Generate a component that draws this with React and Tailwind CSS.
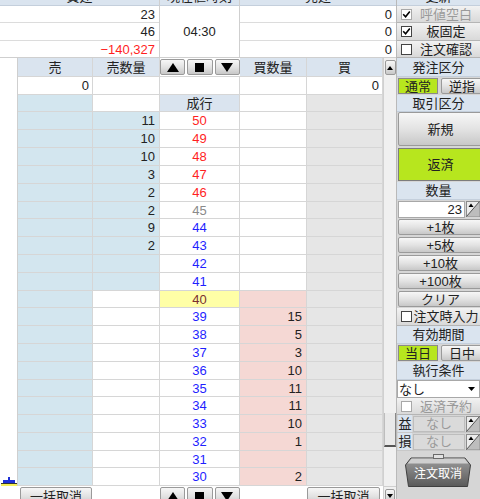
import React from 'react';
import clsx from 'clsx';

const HDR = 'bg-[#dae4ef]';
const SELL = 'bg-[#d3e6ef]';
const PINK = 'bg-[#f5d8d4]';
const GRAY = 'bg-[#e6e6e6]';
const LIME = 'bg-[#b7e61e]';
const BTN = 'bg-gradient-to-b from-[#f7f7f7] via-[#e3e3e3] to-[#c8c8c8] border border-[#9a9a9a] rounded-[2px]';
const LINE = 'border-[#d6d6d6]';

const prices = [50, 49, 48, 47, 46, 45, 44, 43, 42, 41, 40, 39, 38, 37, 36, 35, 34, 33, 32, 31, 30];
const heights = [18, 18, 18, 18, 18, 17, 18, 18, 18, 18, 17, 18, 18, 18, 18, 17, 18, 18, 18, 17, 18];
const sellQty = { 50: 11, 49: 10, 48: 10, 47: 3, 46: 2, 45: 2, 44: 9, 43: 2 };
const buyQty = { 39: 15, 38: 5, 37: 3, 36: 10, 35: 11, 34: 11, 33: 10, 32: 1, 30: 2 };

function priceColor(p) {
  if (p >= 46) return 'text-[#ff1f1f]';
  if (p === 45) return 'text-[#8a8a8a]';
  if (p === 40) return 'text-[#7a3030]';
  return 'text-[#1f1fff]';
}

function Tri({ down, w = 12, h = 9 }) {
  return (
    <svg width={w} height={h} viewBox={`0 0 ${w} ${h}`}>
      <polygon points={down ? `0,0 ${w},0 ${w / 2},${h}` : `0,${h} ${w / 2},0 ${w},${h}`} fill="#000" />
    </svg>
  );
}

function ArrowButtons() {
  return (
    <div className="flex h-full gap-[2px] py-[1px]">
      <div className={clsx(BTN, 'flex-1 flex items-center justify-center')}>
        <Tri />
      </div>
      <div className={clsx(BTN, 'flex-1 flex items-center justify-center')}>
        <span className="w-[9px] h-[9px] bg-black" />
      </div>
      <div className={clsx(BTN, 'flex-1 flex items-center justify-center')}>
        <Tri down />
      </div>
    </div>
  );
}

function Spin() {
  return (
    <svg width="14" height="16" viewBox="0 0 14 16" className="shrink-0">
      <rect x="0.5" y="0.5" width="13" height="15" fill="#ececec" stroke="#8c8c8c" />
      <polygon points="13.5,0.5 13.5,15.5 0.5,15.5" fill="#bdbdbd" />
      <line x1="0.5" y1="15.5" x2="13.5" y2="0.5" stroke="#555" />
      <polygon points="2.5,6 5,2.5 7.5,6" fill="#000" />
    </svg>
  );
}

function Check({ checked, disabled }) {
  return (
    <span
      className={clsx(
        'w-[11px] h-[11px] shrink-0 border bg-white flex items-center justify-center',
        disabled ? 'border-[#a8a8a8]' : 'border-[#444]'
      )}
    >
      {checked && (
        <svg width="9" height="9" viewBox="0 0 9 9">
          <path d="M1.2 4.3 L3.6 6.8 L7.8 1.6" stroke="#000" strokeWidth="1.6" fill="none" />
        </svg>
      )}
    </span>
  );
}

function Hdr({ h, children }) {
  return (
    <div className={clsx(HDR, h, 'flex items-center justify-center border-b border-[#c4cfdc]')}>{children}</div>
  );
}

function CheckRow({ h, checked, disabled, children }) {
  return (
    <div className={clsx(h, 'flex items-center pl-[4px] bg-gradient-to-b from-[#f2f2f2] to-[#d9d9d9] border-b border-[#b5b5b5]')}>
      <Check checked={checked} disabled={disabled} />
      <span className={clsx('flex-1 text-center', disabled ? 'text-[#9a9a9a]' : 'text-[#222]')}>{children}</span>
    </div>
  );
}

function PanelButton({ children }) {
  return (
    <div className="h-[18px] py-[1px] pl-[1px] -mr-[3px]">
      <div className={clsx(BTN, 'h-full flex items-center justify-center')}>{children}</div>
    </div>
  );
}

function Toggle({ on, off }) {
  return (
    <div className="h-[18px] py-[1px] pl-[1px] flex gap-[3px] -mr-[3px]">
      <div className={clsx(LIME, 'w-[40px] border border-[#8a8a8a] flex items-center justify-center')}>{on}</div>
      <div className={clsx(BTN, 'flex-1 flex items-center justify-center')}>{off}</div>
    </div>
  );
}

function LimitRow({ label }) {
  return (
    <div className="h-[18px] flex items-center pl-[1px] gap-[1px] border-b border-[#c8c8c8]">
      <div className={clsx(HDR, 'w-[15px] h-full flex items-center justify-center')}>{label}</div>
      <div className="w-[56px] h-[16px] bg-[#dadada] border border-[#bdbdbd] flex items-center justify-center text-[#9a9a9a]">
        なし
      </div>
      <Spin />
    </div>
  );
}

function CancelBox() {
  return (
    <div className="relative w-[68px] h-[35px] ml-[7px] mt-[2px] flex items-center justify-center">
      <svg className="absolute inset-0" width="68" height="35" viewBox="0 0 68 35">
        <defs>
          <linearGradient id="cx" x1="0" y1="0" x2="0" y2="1">
            <stop offset="0" stopColor="#9c9c9c" />
            <stop offset="1" stopColor="#5a5a5a" />
          </linearGradient>
        </defs>
        <path d="M7 5 H61 L66.5 12 L63.5 33.5 H4.5 L1.5 12 Z" fill="url(#cx)" stroke="#3f3f3f" />
        <path d="M7.5 5.5 H60.5 L64.5 10.5 H3.5 Z" fill="#cfcfcf" />
        <rect x="29.5" y="1.5" width="10" height="4" fill="#e2e2e2" stroke="#6a6a6a" />
      </svg>
      <span className="relative text-white text-[12px] mt-[7px]">注文取消</span>
    </div>
  );
}

function BookRow({ h, children }) {
  return <div className={clsx('flex', h)}>{children}</div>;
}

function Cell({ w, bg, className, children }) {
  return (
    <div className={clsx('h-full border-r border-b flex items-center', LINE, w, bg, className)}>{children}</div>
  );
}

export default function App() {
  return (
    <div className="w-[480px] h-[499px] overflow-hidden bg-white text-[13px] leading-none text-[#222] font-['Liberation_Sans','Noto_Sans_CJK_JP',sans-serif]">
      <div className="flex -mt-[12px]">
        <div className="w-[396px] flex flex-col">
          {/* summary */}
          <div className="flex">
            <div className="w-[160px] border-r border-[#cfcfcf]">
              <Hdr h="h-[18px]">買建</Hdr>
              <div className="h-[17px] flex items-center justify-end pr-[4px] border-b border-[#dcdcdc]">23</div>
              <div className="h-[18px] flex items-center justify-end pr-[4px] border-b border-[#dcdcdc]">46</div>
              <div className="h-[17px] flex items-center justify-end pr-[4px] border-b border-[#cfcfcf] text-[#ff1f1f]">
                −140,327
              </div>
            </div>
            <div className="w-[80px] flex flex-col border-r border-[#cfcfcf]">
              <Hdr h="h-[18px]">現在値時刻</Hdr>
              <div className="flex-1 flex items-center justify-center border-b border-[#cfcfcf]">04:30</div>
            </div>
            <div className="w-[156px]">
              <Hdr h="h-[18px]">売建</Hdr>
              <div className="h-[17px] flex items-center justify-end pr-[4px] border-b border-[#dcdcdc]">0</div>
              <div className="h-[18px] flex items-center justify-end pr-[4px] border-b border-[#dcdcdc]">0</div>
              <div className="h-[17px] flex items-center justify-end pr-[4px] border-b border-[#cfcfcf]">0</div>
            </div>
          </div>

          {/* order book */}
          <div className="flex">
            <div className="w-[383px] flex flex-col">
              <BookRow h="h-[19px]">
                <div className="w-[18px] h-full border-r border-[#cfcfcf]" />
                <Cell w="w-[75px]" bg={HDR} className="justify-center border-[#c4cfdc]">売</Cell>
                <Cell w="w-[67px]" bg={HDR} className="justify-center border-[#c4cfdc]">売数量</Cell>
                <div className="w-[80px] h-full border-b border-[#d6d6d6]">
                  <ArrowButtons />
                </div>
                <Cell w="w-[67px]" bg={HDR} className="justify-center border-[#c4cfdc]">買数量</Cell>
                <Cell w="w-[76px]" bg={HDR} className="justify-center border-[#c4cfdc]">買</Cell>
              </BookRow>
              <BookRow h="h-[18px]">
                <div className="w-[18px] h-full border-r border-[#cfcfcf]" />
                <Cell w="w-[75px]" className="justify-end pr-[3px]">0</Cell>
                <Cell w="w-[67px]" />
                <Cell w="w-[80px]" />
                <Cell w="w-[67px]" />
                <Cell w="w-[76px]" className="justify-end pr-[3px]">0</Cell>
              </BookRow>
              <BookRow h="h-[17px]">
                <div className="w-[18px] h-full border-r border-[#cfcfcf]" />
                <Cell w="w-[75px]" bg={SELL} />
                <Cell w="w-[67px]" />
                <Cell w="w-[80px]" bg={HDR} className="justify-center">成行</Cell>
                <Cell w="w-[67px]" />
                <Cell w="w-[76px]" bg={GRAY} />
              </BookRow>
              {prices.map((p, i) => (
                <BookRow key={p} h={heights[i] === 17 ? 'h-[17px]' : 'h-[18px]'}>
                  <div className="w-[18px] h-full border-r border-[#cfcfcf] flex flex-col justify-end">
                    {p === 30 && (
                      <div className="flex flex-col items-center">
                        <span className="w-[2px] h-[3px] bg-[#1d2fd6]" />
                        <span className="w-[12px] h-[3px] bg-[#1d2fd6]" />
                        <span className="w-[16px] h-[1px] bg-[#333]" />
                        <span className="w-[16px] h-[2px] bg-[#f5ef5a]" />
                      </div>
                    )}
                  </div>
                  <Cell w="w-[75px]" bg={SELL} />
                  <Cell w="w-[67px]" bg={p >= 41 ? SELL : 'bg-white'} className="justify-end pr-[4px]">
                    {sellQty[p]}
                  </Cell>
                  <Cell
                    w="w-[80px]"
                    bg={p === 40 ? 'bg-[#ffffa6]' : 'bg-white'}
                    className={clsx('justify-center', priceColor(p))}
                  >
                    {p}
                  </Cell>
                  <Cell w="w-[67px]" bg={p <= 40 ? PINK : 'bg-white'} className="justify-end pr-[4px]">
                    {buyQty[p]}
                  </Cell>
                  <Cell w="w-[76px]" bg={GRAY} />
                </BookRow>
              ))}
              <BookRow h="h-[20px]">
                <div className="w-[18px] h-full" />
                <div className="w-[75px] h-full pl-[2px] pr-[1px] pt-[1px]">
                  <div className={clsx(BTN, 'h-[18px] flex items-center justify-center')}>一括取消</div>
                </div>
                <div className="w-[67px] h-full" />
                <div className="w-[80px] h-full">
                  <ArrowButtons />
                </div>
                <div className="w-[67px] h-full" />
                <div className="w-[76px] h-full pr-[3px] pt-[1px]">
                  <div className={clsx(BTN, 'h-[18px] flex items-center justify-center')}>一括取消</div>
                </div>
              </BookRow>
            </div>

            {/* scrollbar */}
            <div className="w-[13px] bg-[#f0f0f0] border-l border-[#d0d0d0] flex flex-col items-center">
              <div className={clsx(BTN, 'mt-[2px] w-[11px] h-[15px] flex items-center justify-center')}>
                <Tri w={6} h={4} />
              </div>
              <div className="mt-[338px] w-[12px] h-[34px] bg-[#e9e9e9] border-l border-[#bdbdbd] border-b-2 border-b-[#555] border-r border-r-[#888]" />
              <div className="mt-[39px] w-full border-t border-[#cfcfcf]" />
              <div className={clsx(BTN, 'mt-[2px] w-[10px] h-[14px] flex items-center justify-center')}>
                <Tri down w={6} h={4} />
              </div>
            </div>
          </div>
        </div>

        {/* right panel */}
        <div className="w-[84px] h-[520px] bg-[#d6d6d6] border-l border-[#b9b9b9] overflow-hidden flex flex-col">
          <Hdr h="h-[18px]">更新</Hdr>
          <CheckRow h="h-[17px]" checked disabled>呼値空白</CheckRow>
          <CheckRow h="h-[18px]" checked>板固定</CheckRow>
          <CheckRow h="h-[17px]">注文確認</CheckRow>
          <Hdr h="h-[19px]">発注区分</Hdr>
          <Toggle on="通常" off="逆指" />
          <Hdr h="h-[17px]">取引区分</Hdr>
          <div className="h-[35px] pb-[1px] pl-[1px] -mr-[3px]">
            <div className={clsx(BTN, 'h-full flex items-center justify-center')}>新規</div>
          </div>
          <div className="h-[35px] py-[1px] pl-[1px] -mr-[3px]">
            <div className={clsx(LIME, 'h-full border border-[#7d7d7d] flex items-center justify-center')}>返済</div>
          </div>
          <Hdr h="h-[18px]">数量</Hdr>
          <div className="h-[18px] flex items-center pl-[1px] gap-[1px]">
            <div className="w-[68px] h-[17px] bg-white border border-[#a8a8a8] flex items-center justify-end pr-[2px]">23</div>
            <Spin />
          </div>
          <PanelButton>+1枚</PanelButton>
          <PanelButton>+5枚</PanelButton>
          <PanelButton>+10枚</PanelButton>
          <PanelButton>+100枚</PanelButton>
          <PanelButton>クリア</PanelButton>
          <CheckRow h="h-[18px]">注文時入力</CheckRow>
          <Hdr h="h-[18px]">有効期間</Hdr>
          <Toggle on="当日" off="日中" />
          <Hdr h="h-[18px]">執行条件</Hdr>
          <div className="h-[18px] flex items-center bg-white border border-[#a8a8a8] pl-[1px] pr-[4px]">
            <span className="flex-1">なし</span>
            <Tri down w={7} h={4} />
          </div>
          <CheckRow h="h-[17px]" disabled>返済予約</CheckRow>
          <LimitRow label="益" />
          <LimitRow label="損" />
          <CancelBox />
        </div>
      </div>
    </div>
  );
}
